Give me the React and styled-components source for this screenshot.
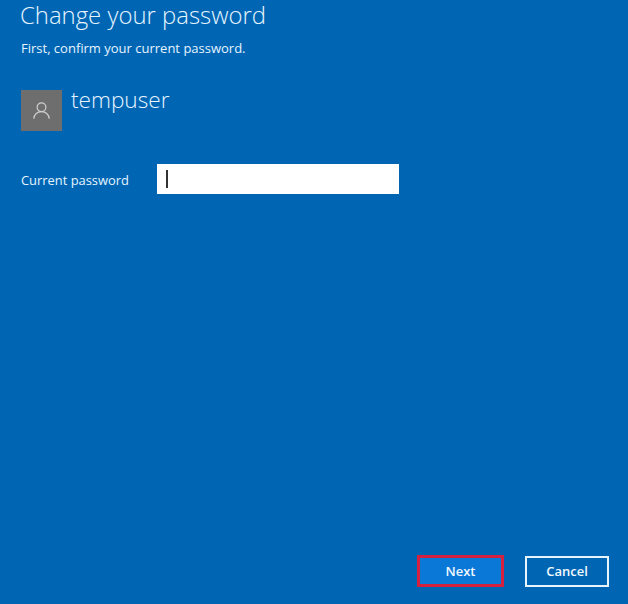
import React from 'react'
import styled, { createGlobalStyle } from 'styled-components'

const GlobalStyle = createGlobalStyle`
    html, body {
        margin: 0;
        height: 100%;
        background-color: #0066B4;
    }
    #root {
        height: 100%;
    }
`

const Page = styled.div`
    box-sizing: border-box;
    display: flex;
    flex-direction: column;
    height: 604px;
    padding: 0 19px 17px 21px;
    color: #fff;
    font-family: "Open Sans", "Noto Sans", "Liberation Sans", sans-serif;
`

const Title = styled.h1`
    margin: 0 0 0 -1px;
    font-size: 23.9px;
    font-weight: 300;
    line-height: 30px;
    color: #e6f4ff;
`

const Subtitle = styled.p`
    margin: 9px 0 0;
    font-size: 13px;
    line-height: 18px;
    color: #e6f4ff;
`

const UserRow = styled.div`
    display: flex;
    align-items: flex-start;
    gap: 9px;
    margin-top: 33px;
`

const Avatar = styled.div`
    display: flex;
    align-items: center;
    justify-content: center;
    width: 41px;
    height: 41px;
    background-color: #6e6e6e;
`

const UserName = styled.div`
    margin-top: -4px;
    font-size: 22.6px;
    font-weight: 300;
    line-height: 28px;
    color: #e6f4ff;
`

const PasswordRow = styled.div`
    display: flex;
    align-items: center;
    margin-top: 33px;
`

const Label = styled.label`
    width: 136px;
    padding-top: 1px;
    font-size: 12.9px;
    color: #e6f4ff;
`

const InputBox = styled.div`
    display: flex;
    align-items: center;
    width: 242px;
    height: 30px;
    padding-left: 9px;
    box-sizing: border-box;
    background-color: #fff;
`

const Caret = styled.span`
    width: 1.5px;
    height: 18px;
    background-color: #333;
`

const Footer = styled.div`
    display: flex;
    justify-content: flex-end;
    align-items: center;
    gap: 21px;
    margin-top: auto;
`

const Button = styled.button`
    box-sizing: border-box;
    height: ${props => (props.$primary ? '32px' : '31px')};
    width: ${props => (props.$primary ? '87px' : '84px')};
    padding: 0;
    border: ${props => (props.$primary ? '3px solid #d3213f' : '2px solid #e8f4fc')};
    background-color: ${props => (props.$primary ? '#0a78d7' : '#0066B4')};
    color: #f2f9ff;
    font-family: inherit;
    font-size: 13px;
    font-weight: 600;
`

const App = () => (
    <Page>
        <GlobalStyle />
        <Title>Change your password</Title>
        <Subtitle>First, confirm your current password.</Subtitle>
        <UserRow>
            <Avatar>
                <svg width="17" height="17" viewBox="0 0 17 17" fill="none" stroke="#cfcfcf" strokeWidth="1.2">
                    <circle cx="8.5" cy="5.2" r="4.4" />
                    <path d="M.8 16.8c0-4 3.2-7.2 7.7-7.2s7.7 3.2 7.7 7.2" />
                </svg>
            </Avatar>
            <UserName>tempuser</UserName>
        </UserRow>
        <PasswordRow>
            <Label>Current password</Label>
            <InputBox>
                <Caret />
            </InputBox>
        </PasswordRow>
        <Footer>
            <Button $primary>Next</Button>
            <Button>Cancel</Button>
        </Footer>
    </Page>
)

export default App
